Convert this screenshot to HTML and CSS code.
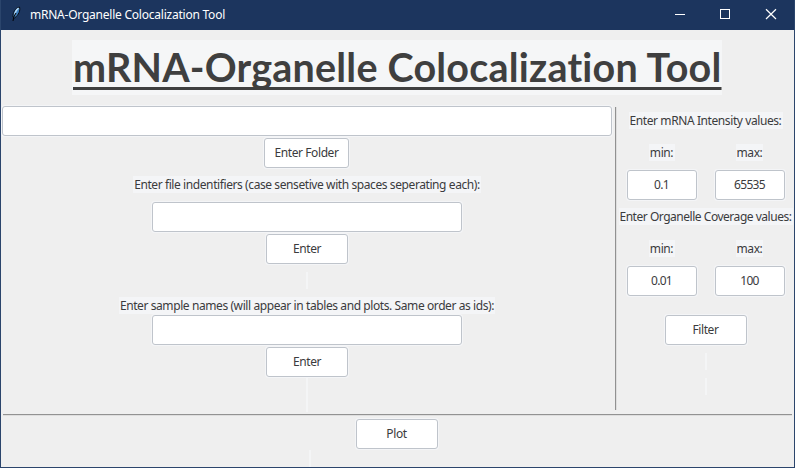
FILE: index.html
```html
<!DOCTYPE html>
<html lang="en">
<head>
<meta charset="utf-8">
<title>mRNA-Organelle Colocalization Tool</title>
<link rel="stylesheet" href="styles.css">
</head>
<body>
<div class="window">
  <header class="titlebar">
    <svg class="feather" width="12" height="16" viewBox="0 0 12 16">
      <path d="M2 11C1.500 7 4 2 8.500 1C9.500 4 8 9 3.500 12Z" fill="#3c7fc0" stroke="#0a0f18" stroke-width="1"/>
      <path d="M3.800 9.500C4 6 5.500 3.500 7.600 2.200" fill="none" stroke="#b9dcf7" stroke-width="1.500"/>
      <path d="M2 15L3 10.500L5 7" fill="none" stroke="#05080d" stroke-width="1.100"/>
    </svg>
    <span class="caption">mRNA-Organelle Colocalization Tool</span>
    <div class="controls">
      <svg width="46" height="30" viewBox="0 0 46 30"><path d="M18 14.500H28" stroke="#fff"/></svg>
      <svg width="46" height="30" viewBox="0 0 46 30"><rect x="17.500" y="9.500" width="9" height="9" fill="none" stroke="#fff"/></svg>
      <svg width="46" height="30" viewBox="0 0 46 30"><path d="M17 9.200L27 19M27 9.200L17 19" stroke="#fff" stroke-width="1.200"/></svg>
    </div>
  </header>
  <div class="heading"><h1>mRNA-Organelle Colocalization Tool</h1></div>
  <main class="main">
    <section class="inputs">
      <div class="field folder"></div>
      <div class="button wide">Enter Folder</div>
      <div class="label ids"><span>Enter file indentifiers (case sensetive with spaces seperating each):</span></div>
      <div class="field names after-ids"></div>
      <div class="button">Enter</div>
      <div class="blank gap"></div>
      <div class="label samples"><span>Enter sample names (will appear in tables and plots. Same order as ids):</span></div>
      <div class="field names"></div>
      <div class="button">Enter</div>
      <div class="blank tall"></div>
    </section>
    <div class="divider"></div>
    <section class="filters">
      <div class="label intensity"><span>Enter mRNA Intensity values:</span></div>
      <div class="range">
        <div class="bound"><div class="label min">min:</div><div class="field value"><span>0.1</span></div></div>
        <div class="bound"><div class="label max">max:</div><div class="field value"><span>65535</span></div></div>
      </div>
      <div class="label coverage"><span>Enter Organelle Coverage values:</span></div>
      <div class="range">
        <div class="bound"><div class="label min">min:</div><div class="field value"><span>0.01</span></div></div>
        <div class="bound"><div class="label max">max:</div><div class="field value"><span>100</span></div></div>
      </div>
      <div class="button filter">Filter</div>
      <div class="blank"></div>
      <div class="blank"></div>
    </section>
  </main>
  <footer class="footer">
    <div class="button">Plot</div>
    <div class="blank"></div>
  </footer>
</div>
</body>
</html>
```
FILE: styles.css
```css
* { box-sizing: border-box; }
body { margin: 0; font: 12px/17px "Noto Sans", "Open Sans", sans-serif; letter-spacing: -0.41px; color: #3b3b3d; }
.window { width: 795px; height: 468px; background: #efefef; border: 1px solid #2b456c; border-top: 0; display: flex; flex-direction: column; overflow: hidden; }
.titlebar { height: 30px; flex: none; margin: 0 -1px; background: #1c355e; color: #fff; display: flex; align-items: center; }
.feather { margin-left: 11px; position: relative; top: -1px; }
.caption { margin-left: 7px; padding-bottom: 1px; white-space: nowrap; letter-spacing: -0.23px; }
.controls { display: flex; margin-left: auto; }
.heading { height: 76px; flex: none; padding: 10px 0 0 71px; }
h1 { margin: 0; width: 650px; height: 55px; background: #f5f6f7; padding: 3px 0 0 1px; font: bold 39.500px/48px Lato, sans-serif; letter-spacing: 0.210px; font-variant-ligatures: none; color: #3f3f3f; white-space: nowrap; text-decoration: underline; text-decoration-thickness: 3px; text-underline-offset: 5px; text-decoration-skip-ink: none; }
.main { display: flex; height: 308px; flex: none; }
.inputs { width: 612px; display: flex; flex-direction: column; align-items: center; }
.field, .button { background: #fff; border: 1px solid #bfc4cb; border-radius: 3px; box-shadow: 0 0 0 1px #f4f5f7; height: 30px; flex: none; display: flex; align-items: center; justify-content: center; padding-bottom: 1px; }
.button { width: 82px; }
.button.wide { width: 85px; margin: 2px 1px 8px 0; }
.field.folder { width: 610px; }
.field.names { width: 310px; margin-bottom: 2px; }
.field.after-ids { margin-top: 9px; }
.label { background: #f4f5f7; height: 17px; flex: none; display: flex; justify-content: center; white-space: nowrap; }
.ids { width: 348px; }
.samples { width: 376px; margin-top: 8px; margin-bottom: 1px; }
.blank { width: 2px; height: 17px; flex: none; background: #f4f5f6; }
.gap { margin-top: 8px; }
.tall { height: 34px; margin-top: 1px; }
.divider { width: 2px; height: 303px; margin: 1px 0 0 2px; background: linear-gradient(90deg, #919191 50%, #dedede 50%); }
.filters { width: 177px; display: flex; flex-direction: column; align-items: center; padding-top: 6px; }
.intensity { width: 154px; }
.coverage { width: 174px; letter-spacing: -0.470px; }
.range { display: flex; gap: 18px; padding: 15px 0 8px; }
.bound { width: 70px; display: flex; flex-direction: column; align-items: center; gap: 9px; }
.min { width: 26px; }
.max { width: 27px; }
.value { width: 70px; letter-spacing: -0.700px; padding-bottom: 2px; }
.filter { margin-top: 11px; margin-bottom: 8px; }
.filters .blank { margin-bottom: 8px; }
.footer { flex: none; margin: 0 2px; height: 53px; border-top: 1px solid #929292; box-shadow: inset 0 1px #dedede; padding: 4px 2px 0 0; display: flex; flex-direction: column; align-items: center; }
.footer .blank { margin: 1px 174px 0 0; }
```
